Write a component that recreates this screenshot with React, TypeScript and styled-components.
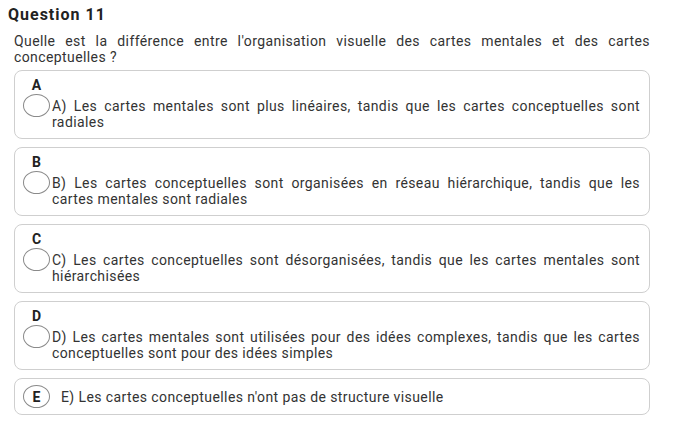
import styled, { createGlobalStyle } from "styled-components";

const options = [
    { letter: "A", text: "A) Les cartes mentales sont plus linéaires, tandis que les cartes conceptuelles sont radiales" },
    { letter: "B", text: "B) Les cartes conceptuelles sont organisées en réseau hiérarchique, tandis que les cartes mentales sont radiales" },
    { letter: "C", text: "C) Les cartes conceptuelles sont désorganisées, tandis que les cartes mentales sont hiérarchisées" },
    { letter: "D", text: "D) Les cartes mentales sont utilisées pour des idées complexes, tandis que les cartes conceptuelles sont pour des idées simples" },
];

function App() {
    return (
        <>
            <GlobalStyle />
            <Page>
                <Title>Question 11</Title>
                <Body>
                    <Prompt>
                        Quelle est la différence entre l'organisation visuelle des cartes mentales et des cartes conceptuelles ?
                    </Prompt>
                    <List>
                        {options.map((o) => (
                            <Card key={o.letter}>
                                <Letter>{o.letter}</Letter>
                                <Row>
                                    <Radio />
                                    <OptionText>{o.text}</OptionText>
                                </Row>
                            </Card>
                        ))}
                        <CompactCard>
                            <Radio $filled>E</Radio>
                            <CompactText>E) Les cartes conceptuelles n'ont pas de structure visuelle</CompactText>
                        </CompactCard>
                    </List>
                </Body>
            </Page>
        </>
    );
}

// GLOBAL
const GlobalStyle = createGlobalStyle`
    html, body {
        margin: 0;
        padding: 0;
        background: #ffffff;
    }

    body {
        font-family: Roboto, "Noto Sans", sans-serif;
        color: #3a3a3a;
    }
`;

const Page = styled.div`
    width: 690px;
    padding: 5px 0 0 8px;
    box-sizing: border-box;
`;

const Title = styled.div`
    font-size: 16px;
    font-weight: 700;
    color: #222;
    line-height: 20px;
    letter-spacing: 1px;
`;

const Body = styled.div`
    padding: 8px 0 0 6px;
    width: 636px;
`;

const Prompt = styled.div`
    font-size: 14px;
    line-height: 16px;
    text-align: justify;
    color: #333;
    letter-spacing: 0.4px;
`;

// CARDS
const List = styled.div`
    display: flex;
    flex-direction: column;
    gap: 8px;
    margin-top: 5px;
`;

const Card = styled.div`
    border: 1px solid #cfcfcf;
    border-radius: 8px;
    padding: 7px 8px 8px 8px;
    display: flex;
    flex-direction: column;
`;

const Letter = styled.div`
    width: 27px;
    text-align: center;
    font-size: 14px;
    font-weight: 700;
    line-height: 14px;
    color: #222;
    margin-bottom: 2px;
`;

const Row = styled.div`
    display: flex;
    align-items: flex-start;
`;

const Radio = styled.div<{ $filled?: boolean }>`
    flex: none;
    width: 25px;
    height: 21px;
    border: 1.5px solid #8a8a8a;
    border-radius: 50%;
    display: flex;
    align-items: center;
    justify-content: center;
    font-size: 14px;
    font-weight: 700;
    color: #222;
`;

const OptionText = styled.div`
    flex: 1;
    margin-top: 4px;
    padding-left: 2px;
    padding-right: 1px;
    font-size: 14px;
    line-height: 16px;
    text-align: justify;
    color: #333;
    letter-spacing: 0.4px;
`;

const CompactCard = styled.div`
    border: 1px solid #cfcfcf;
    border-radius: 8px;
    padding: 6px 8px;
    display: flex;
    align-items: center;
    gap: 11px;
`;

const CompactText = styled.div`
    font-size: 14px;
    line-height: 16px;
    color: #333;
    letter-spacing: 0.4px;
`;

export default App;
